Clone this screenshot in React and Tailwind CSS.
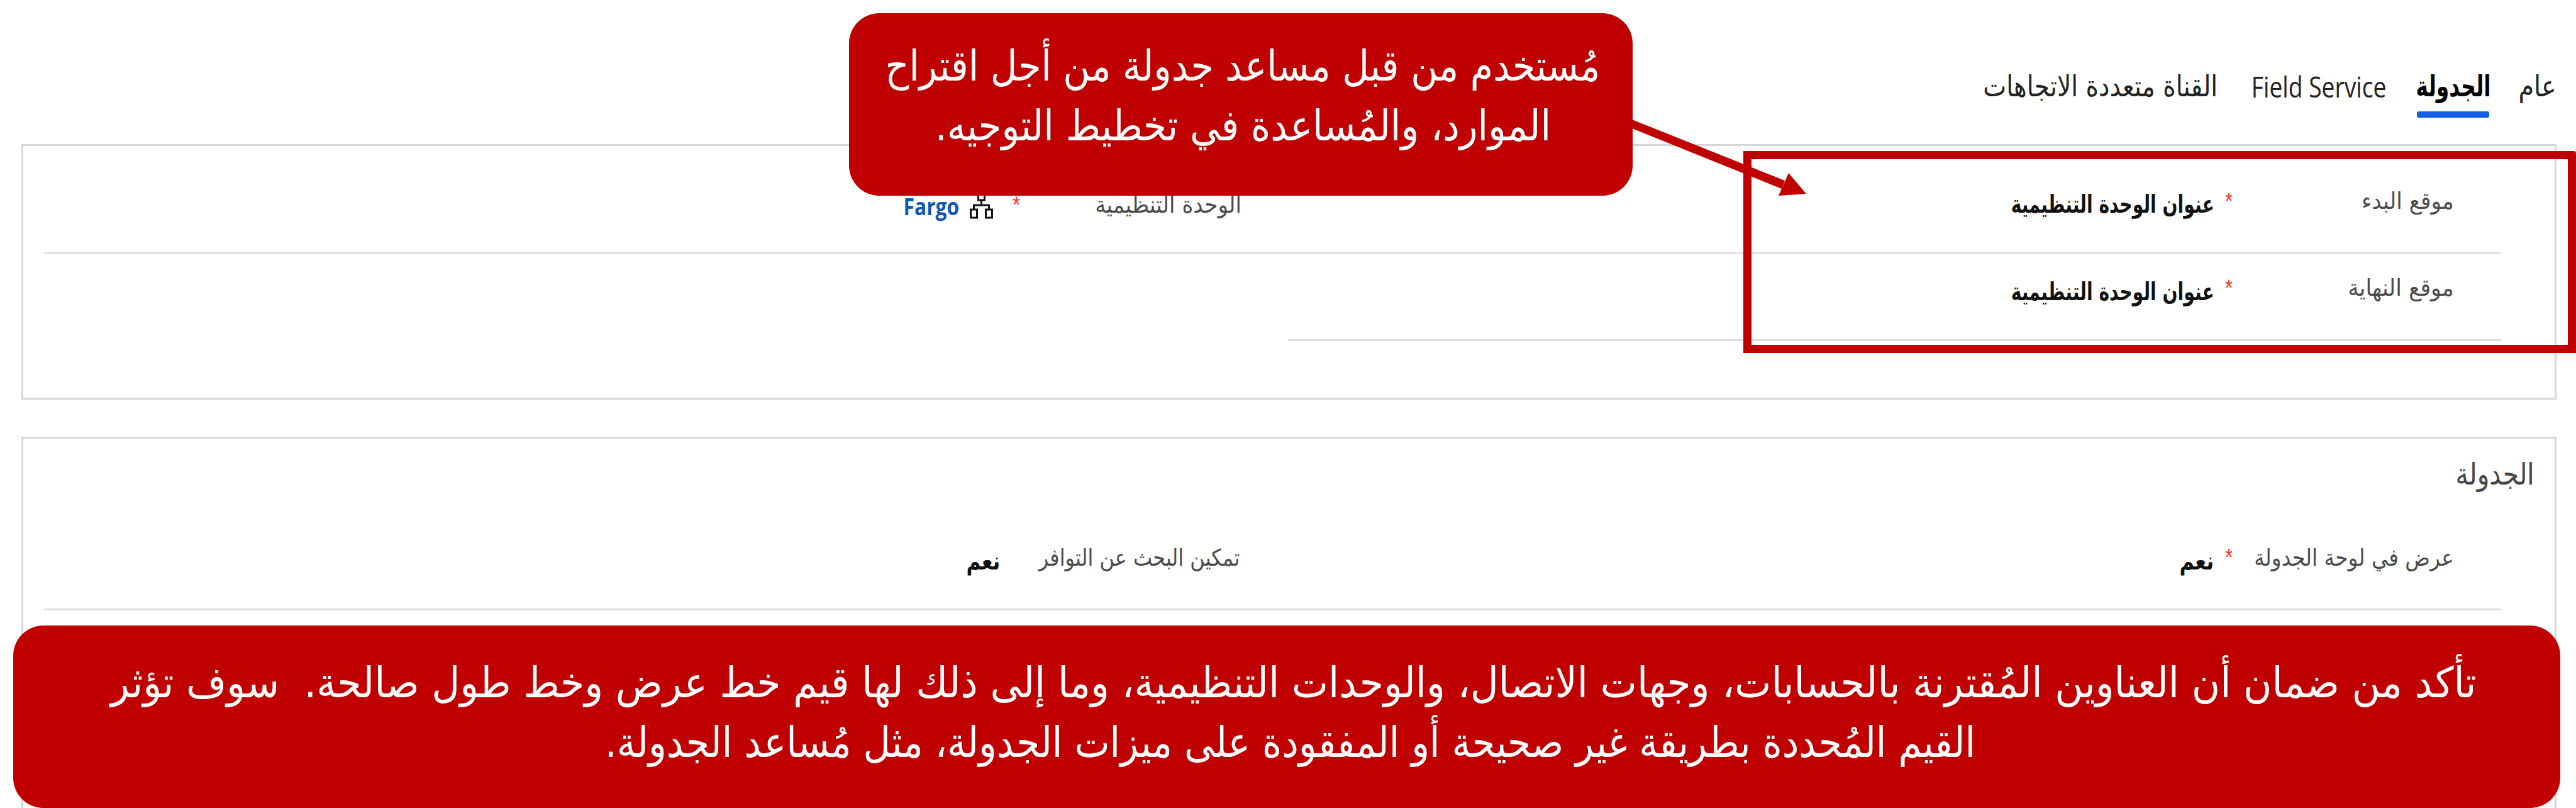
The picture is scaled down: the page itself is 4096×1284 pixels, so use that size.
import { useLayoutEffect, useRef, useState } from "react";

const UI = "font-['DejaVu_Sans',sans-serif]";

// Condenses or widens one line of text so that its ink fills the width of its box.
function Fit({ className = "", children }) {
  const box = useRef(null);
  const line = useRef(null);
  const [transform, setTransform] = useState("none");
  useLayoutEffect(() => {
    const fit = () => {
      const style = getComputedStyle(line.current);
      const ctx = document.createElement("canvas").getContext("2d");
      ctx.font = `${style.fontWeight} ${style.fontSize} ${style.fontFamily}`;
      ctx.direction = "rtl";
      ctx.textAlign = "left";
      const m = ctx.measureText(children);
      const ink = m.actualBoundingBoxLeft + m.actualBoundingBoxRight;
      const scale = box.current.clientWidth / ink;
      const shift = (line.current.offsetWidth - m.actualBoundingBoxRight) * scale;
      setTransform(`translateX(${shift}px) scaleX(${scale})`);
    };
    fit();
    document.fonts.ready.then(fit);
  }, [children]);
  return (
    <div ref={box} className={`shrink-0 ${className}`}>
      <span ref={line} className="inline-block origin-right whitespace-pre" style={{ transform }}>
        {children}
      </span>
    </div>
  );
}

function Star({ className = "" }) {
  return (
    <svg viewBox="0 0 12 14" className={`h-3.5 w-3 shrink-0 ${className}`}>
      <path d="M6 0.5V7M6 7L0.8 4.6M6 7L11.2 4.6M6 7L2.4 13M6 7L9.6 13" fill="none" stroke="#f4442e" strokeWidth="2.2" />
    </svg>
  );
}

function OrgIcon({ className = "" }) {
  return (
    <svg viewBox="0 0 37 50" className={`h-[50px] w-[37px] shrink-0 ${className}`} fill="none" stroke="#111" strokeWidth="3">
      <rect x="13.5" y="6" width="10" height="14" />
      <path d="M18.5 20V28M6.5 34V28H30.5V34" />
      <rect x="1.5" y="35" width="10" height="13" />
      <rect x="25.5" y="35" width="10" height="13" />
    </svg>
  );
}

const LABEL = "h-[60px] text-[37px] leading-[60px] text-[#4b4b4b]";
const VALUE = "h-[60px] text-[39px] leading-[60px] font-bold text-[#111]";

export default function App() {
  return (
    <div dir="rtl" className={`relative flex h-[1284px] w-[4096px] flex-col overflow-hidden bg-white ${UI}`}>
      <nav className="flex h-[229px] shrink-0 pt-[107px] pr-[35px] text-[46px] leading-[60px] text-[#222]">
        <Fit className="w-[54px]">عام</Fit>
        <div className="mr-[49px] w-[115px]">
          <Fit className="w-[115px] font-bold text-black">الجدولة</Fit>
          <div className="mt-[10px] h-[10px] rounded-[3px] bg-[#115ee2]" />
        </div>
        <Fit className="mr-[50px] w-[210px] font-['Open_Sans',sans-serif]">Field Service</Fit>
        <Fit className="mr-[60px] w-[368px]">القناة متعددة الاتجاهات</Fit>
      </nav>

      <section className="mr-[31px] flex h-[406px] w-[4031px] shrink-0 flex-col border-3 border-[#d6d6d6] pr-[85px] pl-[33px]">
        <div className="flex h-[172px] border-b-3 border-[#dedede]">
          <div className="flex w-[1929px] pr-[78px]">
            <div className="w-[349px]">
              <Fit className={`mt-[58px] w-[142px] ${LABEL}`}>موقع البدء</Fit>
            </div>
            <Star className="mt-[74px]" />
            <Fit className={`mt-[63px] mr-[20px] w-[319px] ${VALUE}`}>عنوان الوحدة التنظيمية</Fit>
          </div>
          <div className="flex flex-1 pr-[77px]">
            <div className="w-[349px]">
              <Fit className={`mt-[64px] w-[228px] ${LABEL}`}>الوحدة التنظيمية</Fit>
            </div>
            <Star className="mt-[80px]" />
            <OrgIcon className="mt-[66px] mr-[31px]" />
            <Fit className="mt-[65px] mr-[18px] h-[60px] w-[85px] font-['Open_Sans',sans-serif] text-[38px] leading-[60px] font-bold text-[#1257b3]">Fargo</Fit>
          </div>
        </div>
        <div className="flex h-[138px] w-[1929px] border-b-3 border-[#dedede] pr-[78px]">
          <div className="w-[349px]">
            <Fit className={`mt-[24px] w-[164px] ${LABEL}`}>موقع النهاية</Fit>
          </div>
          <Star className="mt-[40px]" />
          <Fit className={`mt-[30px] mr-[20px] w-[319px] ${VALUE}`}>عنوان الوحدة التنظيمية</Fit>
        </div>
      </section>

      <section className="mt-[59px] mr-[31px] flex h-[620px] w-[4031px] shrink-0 flex-col border-3 border-[#d6d6d6] pr-[85px] pl-[33px]">
        <Fit className="mt-[21px] -mr-[49px] h-[70px] w-[119px] text-[48px] leading-[70px] text-[#444]">الجدولة</Fit>
        <div className="flex h-[182px] border-b-3 border-[#dedede]">
          <div className="flex w-[1929px] pr-[78px]">
            <div className="w-[349px]">
              <Fit className={`mt-[69px] w-[313px] ${LABEL}`}>عرض في لوحة الجدولة</Fit>
            </div>
            <Star className="mt-[84px]" />
            <Fit className={`mt-[74px] mr-[20px] w-[51px] ${VALUE}`}>نعم</Fit>
          </div>
          <div className="flex flex-1 pr-[77px]">
            <Fit className={`mt-[69px] w-[321px] ${LABEL}`}>تمكين البحث عن التوافر</Fit>
            <Fit className={`mt-[74px] mr-[62px] w-[50px] ${VALUE}`}>نعم</Fit>
          </div>
        </div>
      </section>

      {/* Highlight around the start and end location fields */}
      <div className="absolute top-[240px] left-[2772px] h-[321px] w-[1324px] rounded-tr-[4px] border-[13.5px] border-[#c00000]" />

      <svg viewBox="0 0 290 130" className="absolute top-[184px] left-[2590px] h-[130px] w-[290px]">
        <path d="M0 4L248 103L243 116L0 18Z" fill="#c00000" />
        <path d="M254 91L282 124L238 127Z" fill="#c00000" />
      </svg>

      <div className="absolute top-[21px] left-[1350px] flex h-[290px] w-[1246px] flex-col rounded-[48px] bg-[#c00000] pt-[37px] text-[67px] leading-[95px] text-white">
        <Fit className="mr-[56px] w-[1128px]">مُستخدم من قبل مساعد جدولة من أجل اقتراح</Fit>
        <Fit className="mr-[135px] w-[968px]">الموارد، والمُساعدة في تخطيط التوجيه.</Fit>
      </div>

      <div className="absolute top-[994px] left-[21px] flex h-[290px] w-[4050px] flex-col rounded-[48px] bg-[#c00000] pt-[44px] text-[67px] leading-[95px] text-white">
        <Fit className="mr-[135px] w-[3763px]">{"تأكد من ضمان أن العناوين المُقترنة بالحسابات، وجهات الاتصال، والوحدات التنظيمية، وما إلى ذلك لها قيم خط عرض وخط طول صالحة.  سوف تؤثر"}</Fit>
        <Fit className="mr-[935px] w-[2168px]">القيم المُحددة بطريقة غير صحيحة أو المفقودة على ميزات الجدولة، مثل مُساعد الجدولة.</Fit>
      </div>
    </div>
  );
}
